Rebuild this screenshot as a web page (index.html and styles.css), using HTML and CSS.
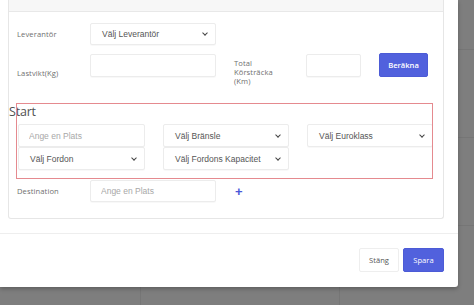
FILE: index.html
```html
<!DOCTYPE html>
<html lang="sv">
<head>
<meta charset="utf-8">
<title>Rutt</title>
<link rel="stylesheet" href="styles.css">
</head>
<body>
<div class="backdrop">
  <div class="modal">
    <div class="modal-body">
      <div class="card">
        <div class="card-header"></div>
        <div class="card-body">
          <div class="row row-one">
            <label class="label">Leverantör</label>
            <div class="sel w-main"><span>Välj Leverantör</span></div>
          </div>
          <div class="row row-two">
            <label class="label label-last">Lastvikt(Kg)</label>
            <input class="field w-main field-top" type="text">
            <label class="label label-total">Total<br>Körsträcka<br>(Km)</label>
            <input class="field w-small field-top" type="text">
            <button class="btn btn-primary btn-calc">Beräkna</button>
          </div>
          <div class="start">
            <h3 class="start-title">Start</h3>
            <div class="start-grid">
              <input class="field" type="text" placeholder="Ange en Plats">
              <div class="sel"><span>Välj Bränsle</span></div>
              <div class="sel"><span>Välj Euroklass</span></div>
              <div class="sel"><span>Välj Fordon</span></div>
              <div class="sel"><span>Välj Fordons Kapacitet</span></div>
            </div>
            <div class="highlight"></div>
          </div>
          <div class="row row-dest">
            <label class="label">Destination</label>
            <input class="field w-main" type="text" placeholder="Ange en Plats">
            <span class="plus">+</span>
          </div>
        </div>
      </div>
    </div>
    <div class="modal-footer">
      <button class="btn btn-light">Stäng</button>
      <button class="btn btn-primary btn-save">Spara</button>
    </div>
  </div>
</div>
</body>
</html>
```

FILE: styles.css
```css
html, body {
  margin: 0;
  padding: 0;
  width: 474px;
  height: 305px;
  overflow: hidden;
}

body {
  background-color: #7e7e7e;
  font-family: "Open Sans", "Noto Sans", sans-serif;
}

.backdrop {
  width: 474px;
  height: 305px;
  background-image:
    linear-gradient(to right, transparent 140px, #767676 140px, #767676 141px, transparent 141px, transparent 339px, #767676 339px, #767676 340px, transparent 340px),
    repeating-linear-gradient(to bottom, transparent 0, transparent 49px, #767676 49px, #767676 50px, transparent 50px, transparent 88px);
  background-position: 0 0, 0 0;
}

.modal {
  width: 458px;
  height: 287px;
  background: #ffffff;
  box-shadow: 0 2px 4px rgba(0, 0, 0, 0.25);
  border-bottom-right-radius: 3px;
  display: flex;
  flex-direction: column;
}

.modal-body {
  padding: 0 14px 14px 8px;
}

.card {
  border: 1px solid #e6e6e6;
  border-top: none;
  border-radius: 0 0 3px 3px;
}

.card-header {
  height: 11px;
  background: #f7f7f7;
  border-bottom: 1px solid #e8e8e8;
}

.card-body {
  padding: 11px 0 16px 0;
}

.row {
  display: flex;
  padding-left: 8px;
}

.row-one {
  height: 22px;
  align-items: center;
}

.row-two {
  margin-top: 8px;
  align-items: flex-start;
  height: 34px;
}

.row-dest {
  margin-top: 10px;
  align-items: center;
  height: 22px;
}

.label {
  width: 73px;
  font-size: 7.6px;
  line-height: 10px;
  color: #6f6f6f;
  letter-spacing: 0.1px;
}

.label-last {
  margin-top: 15px;
}

.label-total {
  width: 72px;
  margin-left: 18px;
  margin-top: 6px;
  line-height: 9px;
}

.w-main {
  width: 126px;
}

.w-small {
  width: 55px;
}

.field,
.sel {
  box-sizing: border-box;
  height: 23px;
  border: 1px solid #ececec;
  border-radius: 2px;
  background: #ffffff;
  box-shadow: 0 1px 1px rgba(0, 0, 0, 0.03);
  font-family: "Liberation Sans", Arial, sans-serif;
  font-size: 8.5px;
  color: #555555;
  margin: 0;
}

.row-one .sel,
.row-dest .field {
  height: 22px;
}

.field {
  padding: 0 0 0 10px;
  outline: none;
}

.field::placeholder {
  color: #a8a8a8;
}

.field-top {
  margin-top: 1px;
}

.sel {
  display: flex;
  align-items: center;
  justify-content: space-between;
  padding: 0 8px 0 11px;
  position: relative;
}

.sel::after {
  content: "";
  width: 3px;
  height: 3px;
  border-right: 1.3px solid #444444;
  border-bottom: 1.3px solid #444444;
  transform: rotate(45deg);
  margin-top: -2px;
}

.btn {
  box-sizing: border-box;
  height: 24px;
  border-radius: 2px;
  font-family: "Open Sans", "Noto Sans", sans-serif;
  font-size: 7.6px;
  padding: 0;
  cursor: pointer;
}

.btn-primary {
  background: #5161dd;
  border: 1px solid #4c5bd6;
  color: #ffffff;
  font-weight: 600;
}

.btn-calc {
  width: 49px;
  margin-left: 18px;
}

.start {
  position: relative;
  margin-top: 17px;
}

.start-title {
  margin: 0;
  font-size: 12.5px;
  line-height: 16px;
  font-weight: 400;
  color: #505050;
  letter-spacing: -0.2px;
}

.start-grid {
  margin: 4px 0 0 9px;
  display: grid;
  grid-template-columns: 127px 126px 126px;
  grid-template-rows: 23px 23px;
  column-gap: 18px;
}

.highlight {
  position: absolute;
  left: 7px;
  top: -1px;
  width: 415px;
  height: 74px;
  border: 1px solid #e58a8f;
  pointer-events: none;
}

.plus {
  margin-left: 19px;
  color: #4a58d8;
  font-family: "Liberation Sans", Arial, sans-serif;
  font-size: 13px;
  font-weight: 700;
  line-height: 13px;
}

.modal-footer {
  border-top: 1px solid #eeeeee;
  padding: 14px 14px 14px 0;
  display: flex;
  justify-content: flex-end;
  gap: 4px;
}

.btn-light {
  width: 40px;
  background: #ffffff;
  border: 1px solid #eeeeee;
  color: #555555;
}

.btn-save {
  width: 41px;
  font-weight: 500;
}
```
